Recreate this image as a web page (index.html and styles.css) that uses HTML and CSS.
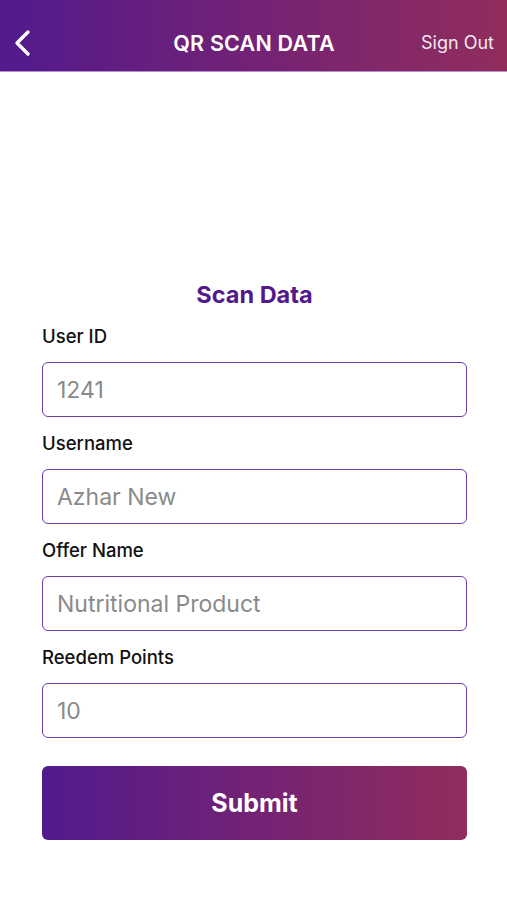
FILE: index.html
```html
<!DOCTYPE html>
<html lang="en">
<head>
    <meta charset="UTF-8">
    <meta name="viewport" content="width=device-width, initial-scale=1.0">
    <title>QR Scan Data</title>
    <link rel="stylesheet" href="styles.css">
</head>
<body>
    <header class="topbar">
        <button class="back" aria-label="Back">
            <svg width="20" height="28" viewBox="0 0 20 28">
                <path d="M16 3 L5 14 L16 25" fill="none" stroke="#fff" stroke-width="3.4" stroke-linecap="round" stroke-linejoin="round"/>
            </svg>
        </button>
        <h1 class="title">QR SCAN DATA</h1>
        <span class="signout">Sign Out</span>
    </header>

    <main class="content">
        <h2 class="form-title">Scan Data</h2>
        <form class="scan-form">
            <label for="userId">User ID</label>
            <input type="text" id="userId" placeholder="1241">

            <label for="username">Username</label>
            <input type="text" id="username" placeholder="Azhar New">

            <label for="offer">Offer Name</label>
            <input type="text" id="offer" placeholder="Nutritional Product">

            <label for="points">Reedem Points</label>
            <input type="text" id="points" placeholder="10">

            <button type="submit" class="submit">Submit</button>
        </form>
    </main>
</body>
</html>
```

FILE: styles.css
```css
body {
    margin: 0;
    font-family: Inter, "Open Sans", sans-serif;
    background: #fff;
    color: #111;
}
.topbar {
    height: 72px;
    box-sizing: border-box;
    display: grid;
    grid-template-columns: 1fr auto 1fr;
    align-items: center;
    padding: 14px 13px 0 10px;
    background: linear-gradient(to right, #511a8d, #7a2470 60%, #902d5c);
    border-bottom: 1px solid #b58fd0;
    color: #fff;
}
.back {
    background: none;
    border: none;
    padding: 0;
    width: 24px;
    height: 28px;
    display: flex;
    align-items: center;
    justify-content: center;
}
.title {
    margin: 0 0 0 4px;
    font-size: 21.5px;
    font-weight: 600;
    letter-spacing: 0.2px;
}
.signout {
    justify-self: end;
    font-size: 18px;
    color: #f3e8f0;
}
.content {
    padding: 209px 40px 40px 42px;
}
.form-title {
    text-align: center;
    margin: 0 0 16px;
    font-size: 23.5px;
    line-height: 28px;
    font-weight: 700;
    color: #53188b;
}
.scan-form {
    display: flex;
    flex-direction: column;
}
label {
    font-size: 18.5px;
    line-height: 22px;
    font-weight: 500;
    color: #111;
    margin-bottom: 15px;
}
input {
    height: 55px;
    box-sizing: border-box;
    border: 1.5px solid #6d3ea8;
    border-radius: 6px;
    padding: 0 14px;
    font-family: inherit;
    font-size: 23px;
    margin-bottom: 15px;
}
input::placeholder {
    color: #8a8a8a;
}
.submit {
    margin-top: 13px;
    height: 74px;
    border: none;
    border-radius: 6px;
    background: linear-gradient(to right, #511a8d, #7a2470 60%, #902d5c);
    color: #fff;
    font-family: inherit;
    font-size: 25px;
    font-weight: 700;
    cursor: pointer;
}
```
